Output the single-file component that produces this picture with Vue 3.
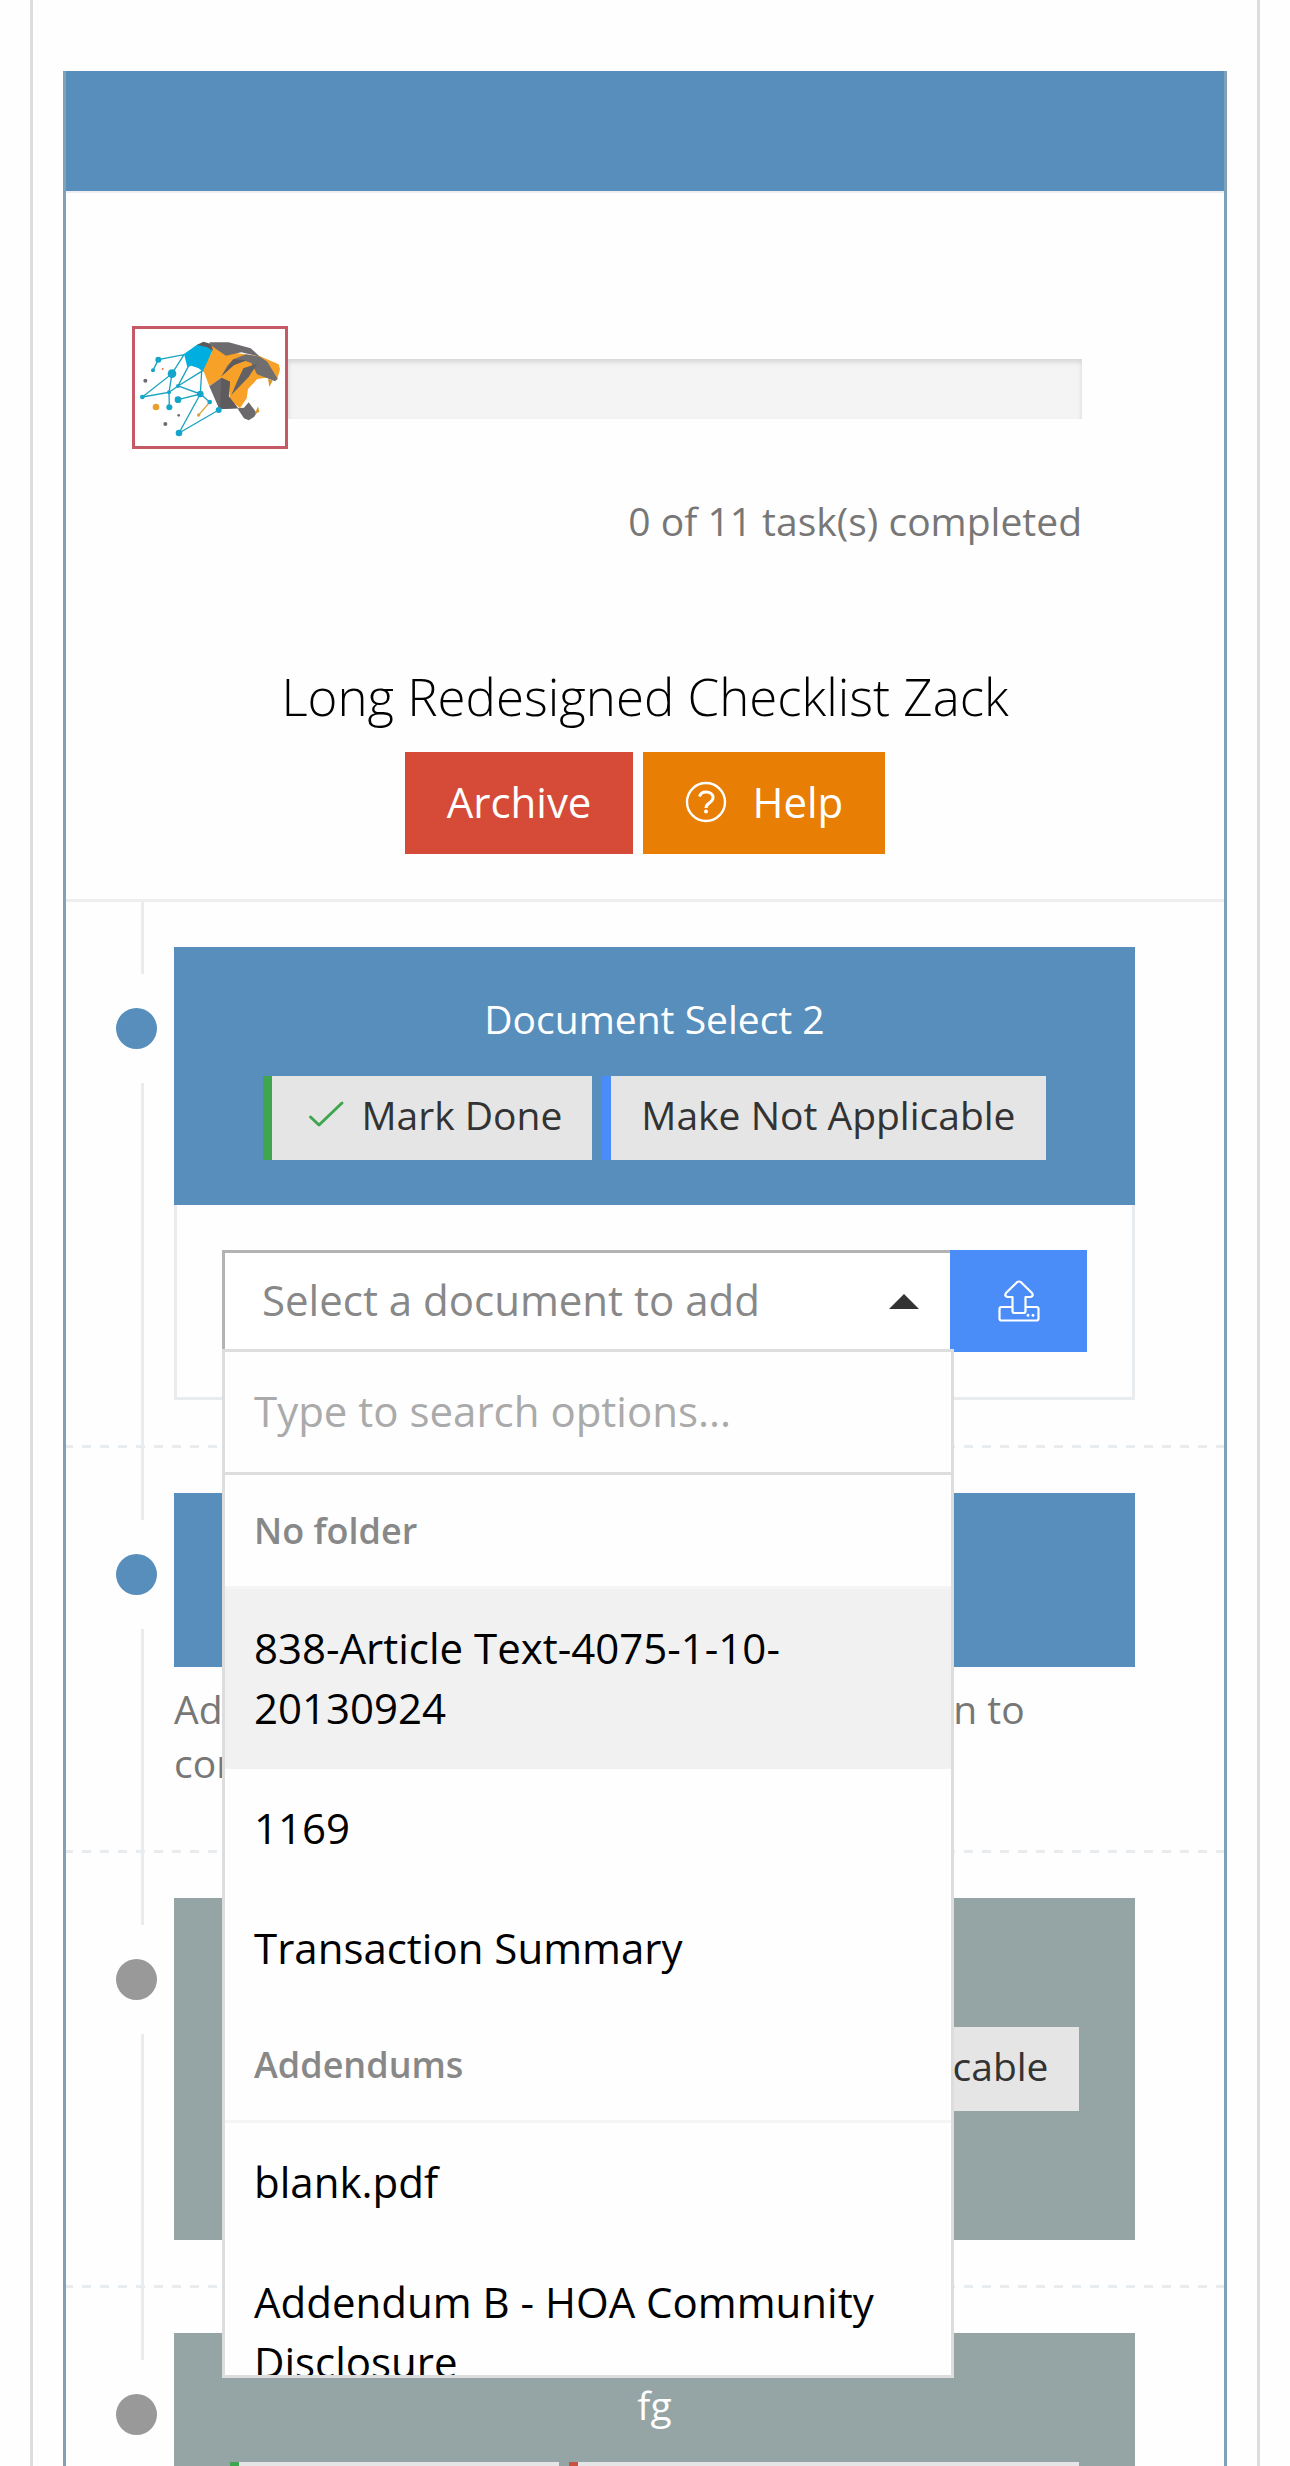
<script setup>
import { computed, ref } from 'vue'

const completed = ref(0)
const total = ref(11)
const percent = computed(() => (completed.value / total.value) * 100)

const query = ref('')
const chosen = ref('')
const highlighted = ref('838-Article Text-4075-1-10-20130924')

const folders = [
  { name: 'No folder', files: ['838-Article Text-4075-1-10-20130924', '1169', 'Transaction Summary'] },
  { name: 'Addendums', files: ['blank.pdf', 'Addendum B - HOA Community Disclosure'] },
]

const visibleFolders = computed(() =>
  folders
    .map((f) => ({ ...f, files: f.files.filter((n) => n.toLowerCase().includes(query.value.toLowerCase())) }))
    .filter((f) => f.files.length),
)

const tasks = [
  { id: 1, title: 'Document Select 2', tone: 'active', actions: ['done', 'na'], picker: true },
  { id: 2, title: 'Add', tone: 'active', actions: [], short: true, note: 'Add your scanned documents in this section to continue' },
  { id: 3, title: 'Task', tone: 'idle', actions: ['done', 'reject'], tall: true },
  { id: 4, title: 'fg', tone: 'idle', actions: ['done', 'reject'] },
]
</script>

<template>
  <main class="page">
    <div class="frame">
      <section class="panel">
        <header class="panel-bar"></header>

        <div class="summary">
          <div class="progress">
            <div class="logo">
              <svg viewBox="75 57 450 351" role="img" aria-label="Company logo">
                <g stroke="#1ba3c0" stroke-width="4" fill="none">
                  <path d="M129 181L145 149L222 134L186 191L97 261L177 247L178 292M186 191L177 247L204 228L275 184L271 252L204 228L240 160M204 269L271 252L299 276M271 252L207 369L326 300" />
                </g>
                <path d="M267 314L297 279" stroke="#d9a441" stroke-width="4" />
                <circle cx="138" cy="291" r="10" fill="#e8a02e" />
                <circle cx="266" cy="315" r="5" fill="#d9a441" />
                <circle cx="158" cy="177" r="3" fill="#e8703c" />
                <g fill="#6e6a70"><circle cx="106" cy="212" r="6" /><circle cx="166" cy="342" r="6" /><circle cx="206" cy="316" r="4" /></g>
                <g transform="translate(210 75)">
                  <path d="M12 57L50 30L72 24L98 46L70 112L56 100L34 92L22 96Z" fill="#00aee0" />
                  <path d="M90 28L140 50L240 64L296 88L300 102L292 132L258 128L232 132L204 162L200 190L180 220L150 196L144 142L124 128L88 154L70 106L98 46Z" fill="#f8a128" />
                  <path d="M50 30L70 20L92 26L100 48L80 36Z" fill="#5b595c" />
                  <path d="M88 22L146 22L212 40L240 65L184 52L138 62L94 32Z" fill="#6d6b6d" />
                  <path d="M160 73L198 58L240 65L262 80L293 132L285 139L262 130L231 118L214 84L196 78L162 90L124 124L142 92Z" fill="#706e6f" />
                  <path d="M160 73L198 76L162 90L124 124Z" fill="#5d5b5d" />
                  <path d="M190 100L232 86L206 126L154 180L172 138Z" fill="#636163" />
                  <path d="M88 154L124 128L150 140L146 184L174 220L192 218L206 202L230 234L222 246L206 256L192 250L172 220L118 223Z" fill="#6b696b" />
                  <path d="M124 128L150 140L146 184L174 220L120 222Z" fill="#5d5b5d" />
                  <path d="M264 130L278 137L268 156ZM224 238L234 214L238 230Z" fill="#d6982f" />
                </g>
                <g fill="#14a5cb">
                  <circle cx="145" cy="149" r="9" /><circle cx="129" cy="181" r="6" />
                  <circle cx="186" cy="191" r="13" /><circle cx="97" cy="261" r="7" />
                  <circle cx="177" cy="247" r="6" /><circle cx="178" cy="292" r="9" />
                  <circle cx="204" cy="228" r="6" /><circle cx="204" cy="269" r="10" />
                  <circle cx="271" cy="252" r="10" /><circle cx="299" cy="276" r="7" />
                  <circle cx="207" cy="369" r="10" /><circle cx="326" cy="300" r="9" />
                </g>
              </svg>
            </div>
            <div class="track" role="progressbar" aria-label="Checklist progress" :aria-valuenow="completed" aria-valuemin="0" :aria-valuemax="total">
              <div class="fill" :style="{ width: percent + '%' }"></div>
            </div>
          </div>
          <p class="count">{{ completed }} of {{ total }} task(s) completed</p>
        </div>

        <div class="heading">
          <h1>Long Redesigned Checklist Zack</h1>
          <div class="heading-actions">
            <button type="button" class="btn archive">Archive</button>
            <button type="button" class="btn help">
              <svg viewBox="0 0 42 42" aria-hidden="true" fill="none" stroke="currentColor">
                <circle cx="21" cy="21" r="19" stroke-width="2.4" />
                <path d="M14.500 15.500C15.500 12 18 11 21 11c4 0 7 2 7 5.500 0 3-2 4.200-4 5.700-2 1.400-3 2.300-3 4.800" stroke-width="3" />
                <circle cx="21" cy="30.500" r="2" fill="currentColor" stroke="none" />
              </svg>
              <span>Help</span>
            </button>
          </div>
        </div>

        <ol class="timeline">
          <li v-for="task in tasks" :key="task.id" class="task">
            <span class="marker" :class="task.tone"></span>
            <article>
              <div class="card" :class="[task.tone, { short: task.short, tall: task.tall }]">
                <h2>{{ task.title }}</h2>
                <div v-if="task.actions.length" class="actions">
                  <template v-for="action in task.actions" :key="action">
                    <button v-if="action === 'done'" type="button" class="chip done">
                      <svg viewBox="0 0 48 42" aria-hidden="true" fill="none" stroke="#3fa650" stroke-width="3" stroke-linecap="round" stroke-linejoin="round">
                        <path d="M8.500 23L17 31L40 9" />
                      </svg>
                      <span>Mark Done</span>
                    </button>
                    <button v-else type="button" class="chip" :class="action">
                      <svg v-if="action === 'reject'" viewBox="0 0 48 42" aria-hidden="true" fill="none" stroke="#c8513f" stroke-width="3" stroke-linecap="round">
                        <path d="M13 10L35 32M35 10L13 32" />
                      </svg>
                      <span>Make Not Applicable</span>
                    </button>
                  </template>
                </div>
              </div>

              <div v-if="task.picker" class="card-body">
                <div class="picker">
                  <select v-model="chosen" aria-label="Document">
                    <option value="">Select a document to add</option>
                    <optgroup v-for="f in folders" :key="f.name" :label="f.name">
                      <option v-for="name in f.files" :key="name" :value="name">{{ name }}</option>
                    </optgroup>
                  </select>
                  <span class="caret"></span>

                  <div class="menu">
                    <input v-model="query" type="text" aria-label="Search options" placeholder="Type to search options..." />
                    <div class="options" role="listbox" aria-label="Documents">
                      <template v-for="f in visibleFolders" :key="f.name">
                        <div class="folder">{{ f.name }}</div>
                        <div
                          v-for="name in f.files"
                          :key="name"
                          role="option"
                          class="option"
                          :class="{ highlighted: name === highlighted }"
                          :aria-selected="name === chosen"
                          @mouseenter="highlighted = name"
                          @click="chosen = name"
                        >{{ name }}</div>
                      </template>
                    </div>
                  </div>
                </div>
                <button type="button" class="upload" aria-label="Upload document">
                  <svg viewBox="0 0 42 42" aria-hidden="true" fill="none" stroke="currentColor" stroke-width="2.200" stroke-linejoin="round" stroke-linecap="round">
                    <path d="M14 27H3.500Q1.500 27 1.500 29V38.500Q1.500 40.500 3.500 40.500H38.500Q40.500 40.500 40.500 38.500V29Q40.500 27 38.500 27H28" />
                    <path d="M14.500 17H9.500Q6 16 8 13L19 2.200Q21 .8 23 2.200L34 13Q36 16 32.500 17H27.500V31Q27.500 33 25.500 33H16.500Q14.500 33 14.500 31Z" />
                    <path d="M30 35.200V35.300M35 35.200V35.300" stroke-width="3" />
                  </svg>
                </button>
              </div>
              <p v-if="task.note" class="note">{{ task.note }}</p>
            </article>
          </li>
        </ol>
      </section>
    </div>
  </main>
</template>

<style>
body {
  margin: 0;
  background: #fefefe;
}
</style>

<style scoped>
* {
  box-sizing: border-box;
}

.page {
  height: 100vh;
  overflow: hidden;
  padding: 0 30px;
  font-family: "Open Sans", "Noto Sans", sans-serif;
  font-size: 39px;
  line-height: 54px;
  color: #777;
}

.frame {
  min-height: 100%;
  padding: 71px 30px 0;
  border: solid #ddd;
  border-width: 0 3px;
}

.panel {
  border: solid #7fa2b8;
  border-width: 0 3px;
}

.panel-bar {
  height: 120px;
  background: #578ebb;
  box-shadow: 0 2px 0 #eceef3;
}

h1,
h2,
p,
ol {
  margin: 0;
  padding: 0;
  font-weight: 400;
}

button,
input,
select {
  margin: 0;
  border: 0;
  border-radius: 0;
  font: inherit;
}

button {
  cursor: pointer;
}

/* Progress */
.summary {
  padding: 135px 142px 0 66px;
}

.progress {
  display: flex;
  align-items: center;
}

.logo {
  flex: none;
  width: 156px;
  height: 123px;
  border: 3px solid #c45a66;
  background: #fff;
}

.logo svg {
  display: block;
  width: 100%;
  height: 100%;
}

.track {
  flex: 1;
  height: 60px;
  margin-top: 3px;
  background: #f4f4f4;
  box-shadow: inset 0 3px 5px rgba(0, 0, 0, 0.13);
}

.fill {
  height: 100%;
  background: #578ebb;
}

.count {
  margin-top: 45px;
  text-align: right;
}

/* Checklist title */
.heading {
  padding: 112px 30px 45px;
  border-bottom: 3px solid #eee;
  text-align: center;
}

h1 {
  font-size: 51px;
  font-weight: 300;
  line-height: 72px;
  color: #000;
}

.heading-actions {
  display: flex;
  justify-content: center;
  gap: 10px;
  margin-top: 20px;
}

.btn {
  display: flex;
  align-items: center;
  gap: 25px;
  padding: 20px 42px 22px;
  font-size: 42px;
  line-height: 60px;
  color: #fff;
}

.archive {
  background: #d64a38;
}

.help {
  background: #e87e04;
}

.btn svg,
.upload svg {
  width: 42px;
  height: 42px;
}

/* Timeline */
.timeline {
  position: relative;
  list-style: none;
}

.timeline::before {
  content: "";
  position: absolute;
  top: 0;
  bottom: 0;
  left: 75px;
  width: 3px;
  background: #e9ecee;
}

.task {
  position: relative;
  padding: 45px 89px 48px 108px;
  background: repeating-linear-gradient(90deg, #e9ecee 0 7px, transparent 7px 16px, #e9ecee 16px 18px) left bottom / 100% 3px no-repeat;
}

.marker {
  position: absolute;
  top: 72px;
  left: 50px;
  width: 41px;
  height: 109px;
  background: #fefefe;
}

.marker::before {
  content: "";
  display: block;
  height: 41px;
  margin-top: 34px;
  border-radius: 50%;
  background: #999;
}

.marker.active::before {
  background: #578ebb;
}

.card {
  padding: 45px 30px;
  text-align: center;
  color: #fff;
}

.card.active {
  background: #578ebb;
}

.card.idle {
  background: #95a5a5;
}

.card.short {
  min-height: 174px;
}

.card.tall {
  min-height: 342px;
}

h2 {
  font-size: 39px;
}

.actions {
  display: flex;
  justify-content: center;
  gap: 10px;
  margin-top: 30px;
}

.chip {
  display: flex;
  align-items: center;
  gap: 11px;
  padding: 12px 30px 18px;
  border-left: 9px solid #4b8df8;
  background: #e5e5e5;
  line-height: 54px;
  color: #333;
  white-space: nowrap;
}

.chip.done {
  border-color: #3fa650;
}

.chip.reject {
  gap: 18px;
  border-color: #c8513f;
}

.chip svg {
  width: 48px;
  height: 42px;
}

.card-body {
  display: flex;
  padding: 45px;
  border: solid #e9ecee;
  border-width: 0 3px 3px;
}

.picker {
  position: relative;
  flex: 1;
}

.picker select {
  display: block;
  width: 100%;
  height: 102px;
  padding: 0 37px 2px;
  border: 3px solid #b3b3b3;
  background: #fff;
  appearance: none;
  font-size: 42px;
  color: #888;
}

.caret {
  position: absolute;
  top: 44px;
  right: 35px;
  border: solid transparent;
  border-width: 0 15px 15px;
  border-bottom-color: #333;
  pointer-events: none;
}

.upload {
  position: relative;
  display: flex;
  align-items: center;
  justify-content: center;
  width: 137px;
  margin-left: -4px;
  background: #4b8df8;
  color: #fff;
}

.menu {
  position: absolute;
  z-index: 2;
  top: 99px;
  left: 0;
  right: 0;
  border: 3px solid #ddd;
  background: #fefefe;
  font-size: 42px;
  line-height: 60px;
  color: #000;
}

.menu input {
  display: block;
  width: 100%;
  height: 123px;
  padding: 0 29px 3px;
  border-bottom: 3px solid #ddd;
  outline: 0;
  background: transparent;
}

.menu input::placeholder {
  color: #aaa;
  opacity: 1;
}

.options {
  height: 900px;
  overflow: hidden;
}

.folder {
  padding: 26px 29px 25px;
  border-bottom: 3px solid #f5f5f5;
  font-size: 36px;
  font-weight: 600;
  color: #888;
}

.option {
  padding: 29px 29px 31px;
  cursor: pointer;
}

.option.highlighted {
  background: #f1f1f1;
}

.note {
  padding: 15px 0;
}
</style>
